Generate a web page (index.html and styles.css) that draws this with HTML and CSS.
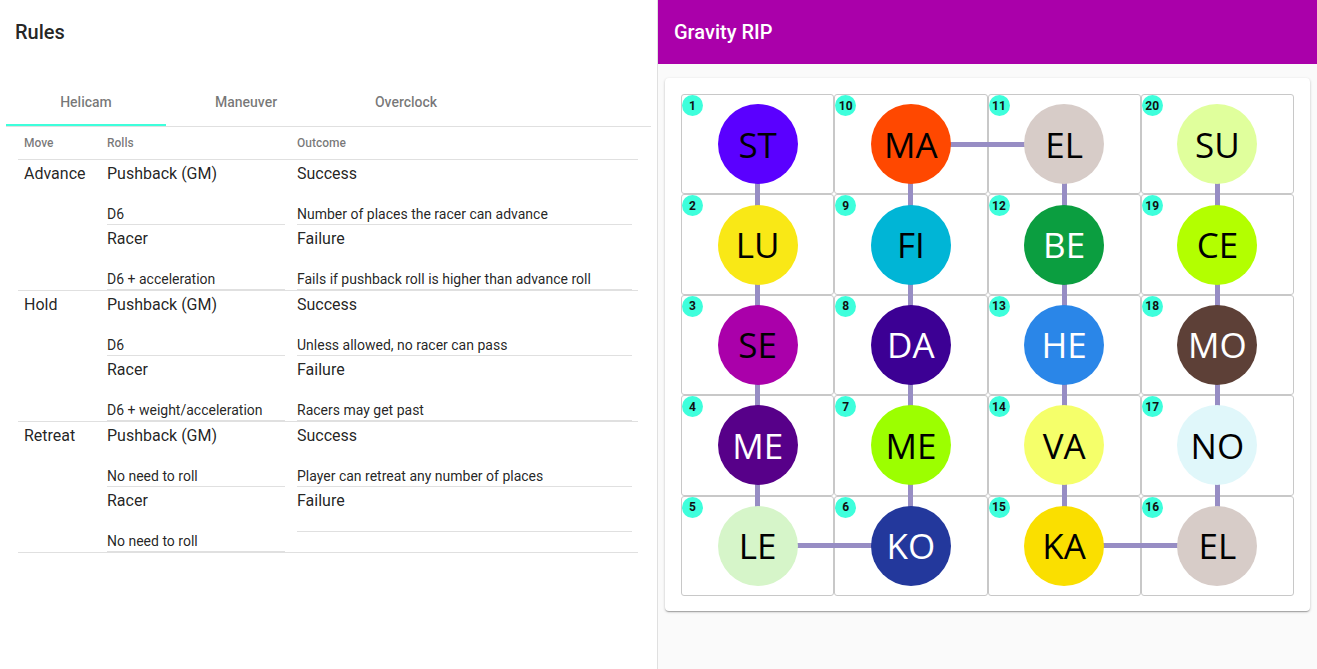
FILE: index.html
```html
<!DOCTYPE html>
<html>
<head>
<meta charset="utf-8">
<link rel="stylesheet" href="styles.css">
</head>
<body>
<div class="page">
  <section class="rules">
    <div class="rules-bar">Rules</div>
    <div class="rules-body">
      <div class="tabs">
        <div class="tab active">Helicam</div>
        <div class="tab">Maneuver</div>
        <div class="tab">Overclock</div>
      </div>
      <table class="moves">
        <thead>
          <tr><th class="c-move">Move</th><th class="c-rolls">Rolls</th><th class="c-out">Outcome</th></tr>
        </thead>
        <tbody>
          <tr>
            <td class="c-move"><div class="movename">Advance</div></td>
            <td class="c-rolls">
              <div class="item"><div class="pri">Pushback (GM)</div><div class="sec">D6</div></div>
              <div class="item"><div class="pri">Racer</div><div class="sec">D6 + acceleration</div></div>
            </td>
            <td class="c-out">
              <div class="item"><div class="pri">Success</div><div class="sec">Number of places the racer can advance</div></div>
              <div class="item"><div class="pri">Failure</div><div class="sec">Fails if pushback roll is higher than advance roll</div></div>
            </td>
          </tr>
          <tr>
            <td class="c-move"><div class="movename">Hold</div></td>
            <td class="c-rolls">
              <div class="item"><div class="pri">Pushback (GM)</div><div class="sec">D6</div></div>
              <div class="item"><div class="pri">Racer</div><div class="sec">D6 + weight/acceleration</div></div>
            </td>
            <td class="c-out">
              <div class="item"><div class="pri">Success</div><div class="sec">Unless allowed, no racer can pass</div></div>
              <div class="item"><div class="pri">Failure</div><div class="sec">Racers may get past</div></div>
            </td>
          </tr>
          <tr>
            <td class="c-move"><div class="movename">Retreat</div></td>
            <td class="c-rolls">
              <div class="item"><div class="pri">Pushback (GM)</div><div class="sec">No need to roll</div></div>
              <div class="item"><div class="pri">Racer</div><div class="sec">No need to roll</div></div>
            </td>
            <td class="c-out">
              <div class="item"><div class="pri">Success</div><div class="sec">Player can retreat any number of places</div></div>
              <div class="item"><div class="pri">Failure</div><div class="sec empty"></div></div>
            </td>
          </tr>
        </tbody>
      </table>
    </div>
  </section>

  <section class="board">
    <div class="board-bar">Gravity RIP</div>
    <div class="card">
      <div class="grid">
        <!-- row 1 -->
        <div class="cell"><span class="seg down"></span><span class="num">1</span><div class="token c-st">ST</div></div>
        <div class="cell"><span class="seg down"></span><span class="seg right"></span><span class="num">10</span><div class="token c-ma">MA</div></div>
        <div class="cell"><span class="seg left"></span><span class="seg down"></span><span class="num">11</span><div class="token c-el">EL</div></div>
        <div class="cell"><span class="seg down"></span><span class="num">20</span><div class="token c-su">SU</div></div>
        <!-- row 2 -->
        <div class="cell"><span class="seg up"></span><span class="seg down"></span><span class="num">2</span><div class="token c-lu">LU</div></div>
        <div class="cell"><span class="seg up"></span><span class="seg down"></span><span class="num">9</span><div class="token c-fi">FI</div></div>
        <div class="cell"><span class="seg up"></span><span class="seg down"></span><span class="num">12</span><div class="token c-be light">BE</div></div>
        <div class="cell"><span class="seg up"></span><span class="seg down"></span><span class="num">19</span><div class="token c-ce">CE</div></div>
        <!-- row 3 -->
        <div class="cell"><span class="seg up"></span><span class="seg down"></span><span class="num">3</span><div class="token c-se">SE</div></div>
        <div class="cell"><span class="seg up"></span><span class="seg down"></span><span class="num">8</span><div class="token c-da light">DA</div></div>
        <div class="cell"><span class="seg up"></span><span class="seg down"></span><span class="num">13</span><div class="token c-he light">HE</div></div>
        <div class="cell"><span class="seg up"></span><span class="seg down"></span><span class="num">18</span><div class="token c-mo light">MO</div></div>
        <!-- row 4 -->
        <div class="cell"><span class="seg up"></span><span class="seg down"></span><span class="num">4</span><div class="token c-me4 light">ME</div></div>
        <div class="cell"><span class="seg up"></span><span class="seg down"></span><span class="num">7</span><div class="token c-me7">ME</div></div>
        <div class="cell"><span class="seg up"></span><span class="seg down"></span><span class="num">14</span><div class="token c-va">VA</div></div>
        <div class="cell"><span class="seg up"></span><span class="seg down"></span><span class="num">17</span><div class="token c-no">NO</div></div>
        <!-- row 5 -->
        <div class="cell"><span class="seg up"></span><span class="seg right"></span><span class="num">5</span><div class="token c-le">LE</div></div>
        <div class="cell"><span class="seg up"></span><span class="seg left"></span><span class="num">6</span><div class="token c-ko light">KO</div></div>
        <div class="cell"><span class="seg up"></span><span class="seg right"></span><span class="num">15</span><div class="token c-ka">KA</div></div>
        <div class="cell"><span class="seg up"></span><span class="seg left"></span><span class="num">16</span><div class="token c-el">EL</div></div>
      </div>
    </div>
  </section>
</div>
</body>
</html>
```

FILE: styles.css
```css
* { box-sizing: border-box; }
html, body { margin: 0; padding: 0; }
body {
  font-family: Roboto, "Liberation Sans", sans-serif;
  color: rgba(0,0,0,0.87);
  width: 1317px;
  height: 669px;
  overflow: hidden;
}
.page {
  display: flex;
  height: 669px;
}

/* ---------- left: rules ---------- */
.rules {
  width: 658px;
  flex: none;
  background: #fff;
  border-right: 1px solid #e0e0e0;
}
.rules-bar {
  height: 64px;
  display: flex;
  align-items: center;
  padding-left: 15px;
  font-size: 20px;
  font-weight: 500;
  color: rgba(0,0,0,0.87);
}
.rules-body {
  padding: 14px 6px 0 6px;
}
.tabs {
  display: flex;
  height: 49px;
  border-bottom: 1px solid #e0e0e0;
}
.tab {
  width: 160px;
  height: 48px;
  display: flex;
  align-items: center;
  justify-content: center;
  font-size: 14px;
  font-weight: 500;
  color: rgba(0,0,0,0.54);
  position: relative;
}
.tab.active::after {
  content: "";
  position: absolute;
  left: 0; right: 0; bottom: 0;
  height: 2px;
  background: #3effdc;
}
.moves {
  margin: 0 12px;
  width: 620px;
  border-collapse: collapse;
  table-layout: fixed;
}
.moves th, .moves td {
  padding: 0 6px;
  text-align: left;
  vertical-align: top;
  border-bottom: 1px solid #e0e0e0;
}
.moves th {
  height: 32px;
  vertical-align: middle;
  font-size: 12px;
  font-weight: 500;
  color: rgba(0,0,0,0.54);
}
.c-move { width: 83px; }
.c-rolls { width: 190px; }
.c-out { width: 347px; }
.movename {
  padding-top: 2px;
  font-size: 16px;
  line-height: 24px;
}
.item {
  padding-top: 2px;
  border-bottom: 1px solid #e0e0e0;
}
.pri {
  font-size: 16px;
  line-height: 24px;
  color: rgba(0,0,0,0.87);
}
.sec {
  margin-top: 19px;
  font-size: 14px;
  line-height: 19px;
  color: rgba(0,0,0,0.87);
}
.sec.empty { height: 0; margin-top: 18px; }

/* ---------- right: board ---------- */
.board {
  flex: 1;
  background: #fafafa;
}
.board-bar {
  height: 64px;
  background: #aa00aa;
  color: #fff;
  font-size: 20px;
  font-weight: 500;
  display: flex;
  align-items: center;
  padding-left: 16px;
}
.card {
  margin: 14px 7px;
  background: #fff;
  border-radius: 4px;
  padding: 16px 16px 15px 16px;
  box-shadow: 0 1px 3px rgba(0,0,0,0.2), 0 1px 1px rgba(0,0,0,0.14), 0 2px 1px -1px rgba(0,0,0,0.12);
}
.grid {
  display: grid;
  grid-template-columns: repeat(4, 1fr);
  grid-auto-rows: 100.4px;
}
.cell {
  position: relative;
  border: 1px solid #c8c8c8;
  border-radius: 3px;
  display: flex;
  align-items: center;
  justify-content: center;
}
.seg {
  position: absolute;
  background: #978dc4;
}
.seg.up { top: -1px; height: 50%; left: calc(50% - 2.5px); width: 5px; }
.seg.down { bottom: -1px; height: 50%; left: calc(50% - 2.5px); width: 5px; }
.seg.left { left: -1px; width: 50%; top: calc(50% - 2.5px); height: 5px; }
.seg.right { right: -1px; width: 50%; top: calc(50% - 2.5px); height: 5px; }
.num {
  position: absolute;
  top: 0;
  left: 0;
  width: 21px;
  height: 21px;
  border-radius: 50%;
  background: #3effdc;
  color: #111;
  font-size: 12px;
  font-weight: 700;
  display: flex;
  align-items: center;
  justify-content: center;
  z-index: 2;
}
.token {
  position: relative;
  z-index: 1;
  width: 80px;
  height: 80px;
  border-radius: 50%;
  display: flex;
  align-items: center;
  justify-content: center;
  font-family: "Open Sans", "Noto Sans", sans-serif;
  font-size: 35px;
  color: #000;
}
.token.light { color: #fff; }
.c-st { background: #5a00ff; }
.c-ma { background: #ff4800; }
.c-el { background: #d7ccc8; }
.c-su { background: #e0ff9c; }
.c-lu { background: #f9e816; }
.c-fi { background: #00b5d6; }
.c-be { background: #0b9e40; }
.c-ce { background: #b3ff00; }
.c-se { background: #aa00aa; }
.c-da { background: #3c0094; }
.c-he { background: #2a86e8; }
.c-mo { background: #5d4037; }
.c-me4 { background: #570089; }
.c-me7 { background: #9cff00; }
.c-va { background: #f5ff6a; }
.c-no { background: #e0f7fa; }
.c-le { background: #d6f5c9; }
.c-ko { background: #23389c; }
.c-ka { background: #fadf00; }
```
